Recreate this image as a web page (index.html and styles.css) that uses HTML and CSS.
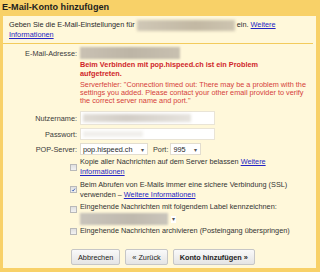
FILE: index.html
```html
<!DOCTYPE html>
<html lang="de">
<head>
<meta charset="utf-8">
<title>E-Mail-Konto hinzufügen</title>
<link rel="stylesheet" href="styles.css">
</head>
<body>
<div class="dialog">
  <div class="title">E-Mail-Konto hinzufügen</div>
  <div class="panel">
    <p class="intro">Geben Sie die E-Mail-Einstellungen für <span class="blur blur-intro"></span> ein. <a href="#">Weitere Informationen</a></p>
    <div class="sep"></div>
    <div class="form">
      <div class="label l-mail">E-Mail-Adresse:</div>
      <div class="value"><span class="blur blur-mail"></span></div>

      <div class="value span2">
        <p class="err-title">Beim Verbinden mit pop.hispeed.ch ist ein Problem<br>aufgetreten.</p>
        <p class="err-text">Serverfehler: "Connection timed out: There may be a problem with the settings you added. Please contact your other email provider to verify the correct server name and port."</p>
      </div>

      <div class="label l-user">Nutzername:</div>
      <div class="value"><span class="input input-user"><span class="blur blur-user"></span></span></div>

      <div class="label l-pass">Passwort:</div>
      <div class="value"><span class="input input-pass"><span class="blur blur-pass"></span></span></div>

      <div class="label l-pop">POP-Server:</div>
      <div class="value row">
        <span class="select sel-server">pop.hispeed.ch<span class="arrow">▾</span></span>
        <span class="port">Port:</span>
        <span class="select sel-port">995<span class="arrow">▾</span></span>
      </div>
    </div>

    <div class="options">
      <div class="opt">
        <span class="cb"></span>
        <span class="opt-text">Kopie aller Nachrichten auf dem Server belassen <a href="#">Weitere Informationen</a></span>
      </div>
      <div class="opt">
        <span class="cb checked"><svg viewBox="0 0 8 8" width="8" height="8"><path d="M1.6 4.2 L3.2 5.8 L6.4 1.8" fill="none" stroke="#2a54b4" stroke-width="1.3"/></svg></span>
        <span class="opt-text">Beim Abrufen von E-Mails immer eine sichere Verbindung (SSL) verwenden – <a href="#">Weitere Informationen</a></span>
      </div>
      <div class="opt opt-top">
        <span class="cb"></span>
        <div class="opt-text">Eingehende Nachrichten mit folgendem Label kennzeichnen:
          <div class="label-select"><span class="blur blur-label"></span><span class="arrow small">▾</span></div>
        </div>
      </div>
      <div class="opt">
        <span class="cb"></span>
        <span class="opt-text">Eingehende Nachrichten archivieren (Posteingang überspringen)</span>
      </div>
    </div>

    <div class="buttons">
      <button class="btn">Abbrechen</button>
      <button class="btn">« Zurück</button>
      <button class="btn primary">Konto hinzufügen »</button>
    </div>
  </div>
</div>
</body>
</html>
```

FILE: styles.css
```css
* { box-sizing: border-box; }
html, body { margin: 0; padding: 0; }
body {
  width: 320px;
  height: 272px;
  overflow: hidden;
  font-family: "Liberation Sans", Arial, sans-serif;
  font-size: 7.3px;
  color: #2a2a2a;
  background: #f8d168;
}
p { margin: 0; }
a { color: #2424c4; text-decoration: underline; }

.dialog {
  width: 320px;
  height: 272px;
  display: flex;
  flex-direction: column;
  background: #f8d168;
}
.title {
  height: 16px;
  padding-left: 2px;
  font-size: 9.1px;
  font-weight: bold;
  line-height: 15px;
  color: #1e1e1e;
}
.panel {
  flex: 1;
  margin: 0 4px 4px 3px;
  background: #fff8da;
  padding: 4px 6px 0 6px;
}
.intro { line-height: 9.5px; }
.blur {
  display: inline-block;
  vertical-align: middle;
  filter: blur(1.5px);
}
.blur-intro {
  width: 98px;
  height: 11px;
  margin: -2px 0;
  background: linear-gradient(90deg, #cfc7b6, #c2b8a3 60%, #cdc4b0);
}
.sep {
  height: 1px;
  background: #f3cb5c;
  margin: 4px -3px 0 -6px;
}

.form {
  display: grid;
  grid-template-columns: 68px auto;
  column-gap: 3px;
  row-gap: 3px;
  align-items: center;
  margin-top: 3px;
}
.label { text-align: right; color: #3a3a3a; }
.span2 { grid-column: 2; }
.blur-mail {
  width: 100px;
  height: 12px;
  background: linear-gradient(90deg, #c9c1b3, #bdb5a6 50%, #c8c0b0);
  filter: blur(1px);
}
.err-title {
  color: #d0262a;
  font-weight: bold;
  line-height: 8.5px;
  margin-top: -1px;
}
.err-text {
  color: #d5413a;
  line-height: 8px;
  margin-top: 3px;
  margin-bottom: 3px;
}
.input {
  display: block;
  width: 135px;
  height: 14px;
  background: #fff;
  border: 1px solid #e9e4d6;
  padding: 2px 2px;
}
.input-pass { height: 12px; }
.blur-user {
  display: block;
  width: 108px;
  height: 8px;
  background: linear-gradient(90deg, #e0dcd6, #d2cdc6 40%, #e6e3de);
}
.blur-pass {
  display: block;
  width: 60px;
  height: 6px;
  background: #f1efec;
}
.row { display: flex; align-items: center; }
.select {
  display: inline-flex;
  align-items: center;
  justify-content: space-between;
  height: 12px;
  background: #fff;
  border: 1px solid #e2ddcf;
  padding: 0 3px 0 2px;
  color: #2a2a2a;
}
.sel-server { width: 68px; }
.sel-port { width: 31px; }
.port { margin: 0 2px 0 5px; color: #3a3a3a; }
.arrow { font-size: 6px; color: #555; }

.options {
  margin-top: 2px;
  padding-left: 61px;
}
.opt {
  display: flex;
  align-items: center;
  gap: 3px;
  margin-bottom: 2.5px;
}
.opt:last-child { margin-bottom: 0; }
.opt-top { align-items: flex-start; }
.opt-top .cb { margin-top: 4px; }
.opt-top { margin-bottom: 1px; }
.opt-text { line-height: 10px; color: #333; }
.cb {
  flex: none;
  width: 7px;
  height: 7px;
  border: 1px solid #b9b9b9;
  background: linear-gradient(#e0e0e0, #f2f2f2);
  display: flex;
  align-items: center;
  justify-content: center;
}
.cb svg { display: block; width: 6px; height: 6px; }
.label-select {
  display: flex;
  align-items: center;
  height: 12px;
  margin-top: 1px;
}
.blur-label {
  width: 88px;
  height: 12px;
  background: linear-gradient(90deg, #c9c4bb, #bfb9ae 60%, #cac5bb);
  filter: blur(1px);
}
.arrow.small { margin-left: 3px; background: #fff; padding: 0 1px; line-height: 7px; }

.buttons {
  display: flex;
  gap: 5px;
  padding-left: 62px;
  margin-top: 13px;
}
.btn {
  font-family: "Liberation Sans", Arial, sans-serif;
  font-size: 7.3px;
  color: #222;
  height: 16px;
  padding: 0 6px;
  border: 1px solid #c6c6c6;
  border-radius: 2px;
  background: linear-gradient(#f9f9f9, #e4e4e4);
}
.btn.primary { font-weight: bold; }
```
